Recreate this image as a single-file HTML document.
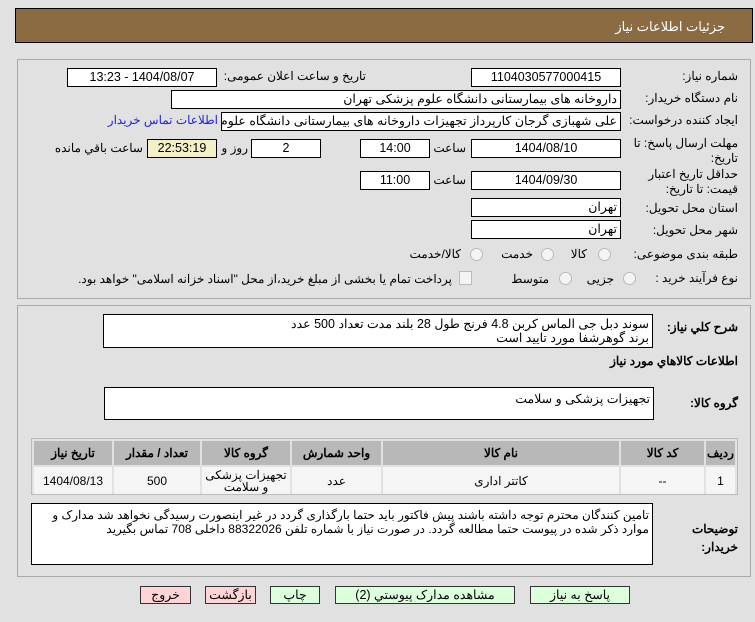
<!DOCTYPE html>
<html><head><meta charset="utf-8"><style>
body{margin:0;width:755px;height:622px;background:#e1e1e1;font-family:Tahoma,"Liberation Sans","Noto Sans CJK SC",sans-serif;font-size:12px;color:#000;position:relative;overflow:hidden}
.a{position:absolute;white-space:nowrap;direction:rtl}
.in{position:absolute;background:#fff;border:1px solid #000;box-sizing:border-box;direction:rtl;padding:0 3px;line-height:16px;white-space:nowrap;overflow:hidden;font-size:12.5px}
.c{text-align:center}
.lb{position:absolute;direction:rtl;text-align:right;font-size:12px;white-space:nowrap}
.rad{position:absolute;width:11px;height:11px;border-radius:50%;border:1px solid #bbb;background:#f4f4f4}
.btn{position:absolute;border:1px solid #333;box-sizing:border-box;text-align:center;line-height:16px;font-size:12.5px;background:#dcffdc}
.pk{background:#ffd4d4}
table{border-collapse:separate;border-spacing:2px}
td{text-align:center;font-size:12px}
</style></head><body>
<div style="position:absolute;left:15px;top:8px;width:738px;height:35px;background:#8b6c42;border:1px solid #000;box-sizing:border-box"></div>
<div class="a" style="right:30px;top:19px;color:#fff;font-size:13px">جزئیات اطلاعات نیاز</div>

<div style="position:absolute;left:17px;top:59px;width:734px;height:240px;border:1px solid #aaa;box-sizing:border-box"></div>

<div class="lb" style="right:17px;top:69px">شماره نیاز:</div>
<div class="in c" style="left:471px;top:68px;width:150px;height:19px">1104030577000415</div>
<div class="lb" style="right:389px;top:69px">تاریخ و ساعت اعلان عمومی:</div>
<div class="in c" style="left:67px;top:68px;width:150px;height:19px">1404/08/07 - 13:23</div>

<div class="lb" style="right:17px;top:91px">نام دستگاه خریدار:</div>
<div class="in" style="left:171px;top:90px;width:450px;height:19px">داروخانه های بیمارستانی دانشگاه علوم پزشکی تهران</div>

<div class="lb" style="right:17px;top:113px">ایجاد کننده درخواست:</div>
<div class="in" style="left:221px;top:112px;width:400px;height:19px">علی شهبازی گرجان کارپرداز تجهیزات داروخانه های بیمارستانی دانشگاه علوم پزشکی تهران</div>
<div class="lb" style="right:537px;top:113px;color:#2222dd">اطلاعات تماس خریدار</div>

<div class="lb" style="right:17px;top:136px;line-height:15px">مهلت ارسال پاسخ: تا<br>تاریخ:</div>
<div class="in c" style="left:471px;top:139px;width:150px;height:19px">1404/08/10</div>
<div class="lb" style="right:289px;top:141px">ساعت</div>
<div class="in c" style="left:360px;top:139px;width:70px;height:19px">14:00</div>
<div class="in c" style="left:251px;top:139px;width:70px;height:19px">2</div>
<div class="lb" style="right:507px;top:141px">روز و</div>
<div class="in c" style="left:147px;top:139px;width:70px;height:19px;background:#f3f0c8">22:53:19</div>
<div class="lb" style="right:612px;top:141px">ساعت باقي مانده</div>

<div class="lb" style="right:17px;top:167px;line-height:15px">حداقل تاریخ اعتبار<br>قیمت: تا تاریخ:</div>
<div class="in c" style="left:471px;top:171px;width:150px;height:19px">1404/09/30</div>
<div class="lb" style="right:289px;top:173px">ساعت</div>
<div class="in c" style="left:360px;top:171px;width:70px;height:19px">11:00</div>

<div class="lb" style="right:17px;top:201px">استان محل تحویل:</div>
<div class="in" style="left:471px;top:198px;width:150px;height:19px">تهران</div>
<div class="lb" style="right:17px;top:223px">شهر محل تحویل:</div>
<div class="in" style="left:471px;top:220px;width:150px;height:19px">تهران</div>

<div class="lb" style="right:17px;top:247px">طبقه بندی موضوعی:</div>
<div class="rad" style="left:598px;top:248px"></div><div class="lb" style="right:168px;top:247px">کالا</div>
<div class="rad" style="left:541px;top:248px"></div><div class="lb" style="right:222px;top:247px">خدمت</div>
<div class="rad" style="left:470px;top:248px"></div><div class="lb" style="right:294px;top:247px">کالا/خدمت</div>

<div class="lb" style="right:17px;top:271px">نوع فرآیند خرید :</div>
<div class="rad" style="left:623px;top:272px"></div><div class="lb" style="right:141px;top:272px">جزیی</div>
<div class="rad" style="left:559px;top:272px"></div><div class="lb" style="right:206px;top:272px">متوسط</div>
<div style="position:absolute;left:459px;top:271px;width:11px;height:12px;border:1px solid #bbb;background:#f4f4f4"></div>
<div class="lb" style="right:303px;top:272px">پرداخت تمام یا بخشی از مبلغ خرید،از محل "اسناد خزانه اسلامی" خواهد بود.</div>

<div style="position:absolute;left:17px;top:305px;width:734px;height:272px;border:1px solid #aaa;box-sizing:border-box"></div>
<div class="lb" style="right:17px;top:320px;font-weight:bold">شرح کلي نیاز:</div>
<div class="in" style="left:103px;top:314px;width:550px;height:34px;line-height:14px;padding-top:2px">سوند دبل جی الماس کربن 4.8 فرنج طول 28 بلند مدت تعداد 500 عدد<br>برند گوهرشفا مورد تایید است</div>
<div class="lb" style="right:17px;top:354px;font-weight:bold">اطلاعات کالاهاي مورد نیاز</div>
<div class="lb" style="right:17px;top:396px;font-weight:bold">گروه کالا:</div>
<div class="in" style="left:104px;top:387px;width:550px;height:33px;padding-top:3px">تجهیزات پزشکی و سلامت</div>

<div style="position:absolute;left:31px;top:438px;width:707px;height:57px;border:1px solid #bbb;box-sizing:border-box;background:#e1e1e1">
<table style="width:705px;direction:rtl">
<tr style="background:#b8b8b8;height:24px;font-weight:bold"><td style="width:27px">ردیف</td><td style="width:81px">کد کالا</td><td style="width:234px">نام کالا</td><td style="width:87px">واحد شمارش</td><td style="width:86px">گروه کالا</td><td style="width:84px">تعداد / مقدار</td><td>تاریخ نیاز</td></tr>
<tr style="background:#f5f5f5;height:27px"><td>1</td><td>--</td><td>کاتتر اداری</td><td>عدد</td><td style="line-height:12px">تجهیزات پزشکی و سلامت</td><td>500</td><td>1404/08/13</td></tr>
</table></div>

<div class="lb" style="right:17px;top:520px;font-weight:bold;line-height:18px">توضیحات<br>خریدار:</div>
<div class="in" style="left:31px;top:503px;width:622px;height:62px;white-space:normal;line-height:14px;padding-top:4px;font-size:12px">تامین کنندگان محترم توجه داشته باشند پیش فاکتور باید حتما بارگذاری گردد در غیر اینصورت رسیدگی نخواهد شد مدارک و موارد ذکر شده در پیوست حتما مطالعه گردد. در صورت نیاز با شماره تلفن 88322026 داخلی 708 تماس بگیرید</div>

<div class="btn" style="left:530px;top:586px;width:100px;height:18px">پاسخ به نیاز</div>
<div class="btn" style="left:335px;top:586px;width:180px;height:18px">مشاهده مدارک پیوستي (2)</div>
<div class="btn" style="left:270px;top:586px;width:50px;height:18px">چاپ</div>
<div class="btn pk" style="left:205px;top:586px;width:51px;height:18px">بازگشت</div>
<div class="btn pk" style="left:140px;top:586px;width:51px;height:18px">خروج</div>
</body></html>
